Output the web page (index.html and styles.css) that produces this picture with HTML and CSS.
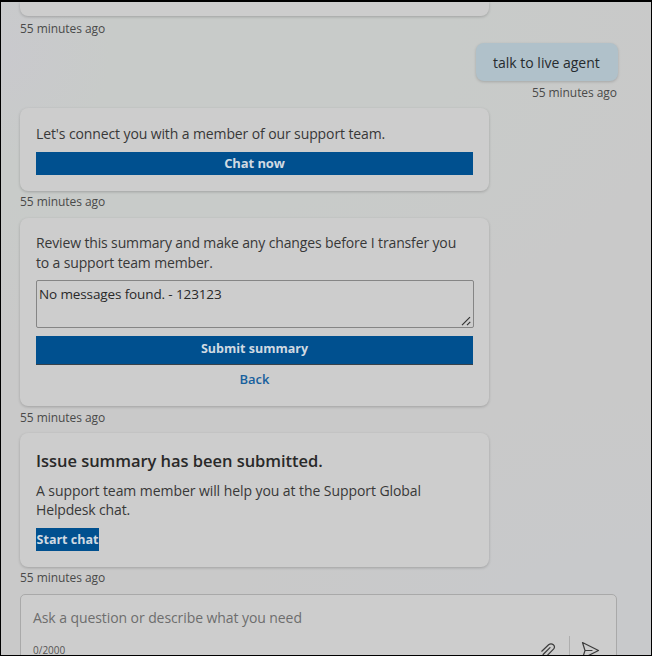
FILE: index.html
```
<!DOCTYPE html>
<html lang="en">
<head>
<meta charset="utf-8">
<title>Support chat</title>
<link rel="stylesheet" href="styles.css">
</head>
<body>
<main class="window">
  <section class="card card-previous"></section>
  <div class="stamp stamp-first"><span>55 minutes ago</span></div>
  <section class="bubble"><span>talk to live agent</span></section>
  <div class="stamp stamp-user"><span>55 minutes ago</span></div>
  <section class="card card-connect">
    <p class="text"><span class="t-connect">Let's connect you with a member of our support team.</span></p>
    <button class="primary chat-now"><span>Chat now</span></button>
  </section>
  <div class="stamp"><span>55 minutes ago</span></div>
  <section class="card card-review">
    <p class="text"><span class="t-review">Review this summary and make any changes before I transfer you</span><br><span class="t-member">to a support team member.</span></p>
    <div class="field">
      <span class="t-field">No messages found. - 123123</span>
      <svg class="grip" width="11" height="10" viewBox="0 0 11 10"><path d="M1 9.2 9 1.2M6 9.2l3.3-3.3"/></svg>
    </div>
    <button class="primary submit"><span>Submit summary</span></button>
    <button class="back"><span>Back</span></button>
  </section>
  <div class="stamp stamp-low"><span>55 minutes ago</span></div>
  <section class="card card-done">
    <h2><span>Issue summary has been submitted.</span></h2>
    <p class="text tight"><span class="t-help">A support team member will help you at the Support Global</span><br><span class="t-desk">Helpdesk chat.</span></p>
    <button class="primary start"><span>Start chat</span></button>
  </section>
  <div class="stamp"><span>55 minutes ago</span></div>
  <section class="composer">
    <div class="placeholder"><span>Ask a question or describe what you need</span></div>
    <div class="tools">
      <span class="count">0/2000</span>
      <svg class="clip" width="18" height="20" viewBox="0 0 18 20"><path d="M1.8 9.2 8.6 2.7C12 .2 16.200 4 13.500 7.200L6.200 14.500C4 16 2 13.800 3.600 12L10 5.600"/></svg>
      <i class="divider"></i>
      <svg class="send" width="20" height="20" viewBox="0 0 20 20"><path d="M1.500 1.500 17.500 9.500 1.500 17.500 4 9.500zM4 9.500h7"/></svg>
    </div>
  </section>
</main>
</body>
</html>
```
FILE: styles.css
```
* { box-sizing: border-box; }
body { margin: 0; }
.window {
  width: 652px;
  height: 656px;
  overflow: hidden;
  display: flex;
  flex-direction: column;
  border: 1px solid #000;
  border-top-width: 2px;
  padding: 0 33px 0 19px;
  font-family: "Open Sans", "Noto Sans", sans-serif;
  font-size: 14px;
  color: #383838;
  background:
    radial-gradient(ellipse 110px 110px at 0 50px, #c9c9cd, rgba(201, 201, 205, 0)),
    radial-gradient(ellipse 430px 260px at 100% 100%, #c8c9cb 40%, rgba(200, 201, 203, 0)),
    radial-gradient(ellipse 530px 300px at 25% 8%, #c8cbc9 55%, rgba(200, 203, 201, 0)),
    #c9c9c9;
}
span { white-space: nowrap; }
p, h2 { margin: 0; }
button { border: 0; padding: 0; font: inherit; display: block; }
.card {
  flex: none;
  width: 469px;
  padding: 0 16px;
  border-radius: 8px;
  background: #cdcdcd;
  box-shadow: 0 1px 3px rgba(0, 0, 0, .2);
}
.card-previous { height: 14px; border-radius: 0 0 8px 8px; }
.card-connect { height: 83px; padding-top: 16px; }
.card-review { height: 188px; padding-top: 15px; }
.card-done { height: 134px; padding-top: 16px; }
.stamp {
  flex: none;
  height: 27px;
  line-height: 22px;
  font-size: 12px;
  color: #4a4a4a;
}
.stamp span { letter-spacing: -.06px; }
.stamp-first { line-height: 25px; }
.stamp-low { line-height: 24px; }
.stamp-user { align-self: flex-end; padding-right: 1px; line-height: 23px; }
.bubble {
  flex: none;
  align-self: flex-end;
  width: 142px;
  height: 38px;
  padding-left: 17px;
  line-height: 39px;
  color: #262b2e;
  border-radius: 8px;
  background: #b0c1ca;
  box-shadow: 0 1px 3px rgba(0, 0, 0, .18);
}
.text { line-height: 20px; }
.text.tight { line-height: 19px; }
.t-connect { letter-spacing: -.11px; }
.t-review { letter-spacing: -.14px; }
.t-member, .t-desk { letter-spacing: -.15px; }
.t-help { letter-spacing: -.07px; }
.primary {
  color: #d0dae2;
  background: #00508f;
  font-size: 12.500px;
  font-weight: 700;
}
.chat-now { width: 437px; height: 23px; margin-top: 8px; line-height: 23px; font-size: 13px; letter-spacing: -.1px; }
.submit { width: 437px; height: 29px; margin-top: 8px; line-height: 24px; padding-bottom: 2px; border-bottom: 1px solid #37424b; }
.start { width: 63px; height: 23px; margin-top: 9px; line-height: 23px; }
.back { width: 437px; height: 28px; line-height: 28px; background: none; color: #17609d; font-size: 13px; font-weight: 600; }
.field {
  position: relative;
  width: 438px;
  height: 48px;
  margin-top: 7px;
  padding-left: 2px;
  line-height: 26px;
  font-size: 13.500px;
  letter-spacing: -.12px;
  color: #292929;
  border: 1px solid #858585;
  border-radius: 2px;
}
.grip { position: absolute; right: 1px; bottom: 1px; fill: none; stroke: #333; stroke-width: 1.200; }
h2 { height: 32px; line-height: 24px; font-size: 16.500px; font-weight: 600; letter-spacing: -.04px; color: #292929; }
.composer {
  flex: none;
  width: 597px;
  height: 100px;
  padding: 0 12px;
  border: 1px solid #a9a9a9;
  border-radius: 5px;
  background: #cdcdcd;
}
.placeholder { height: 41px; line-height: 45px; letter-spacing: -.08px; color: #6d6d6d; }
.tools { display: flex; align-items: flex-start; }
.count { flex: 1; font-size: 10px; line-height: 29px; color: #555; }
.clip, .send { fill: none; stroke: #3c3c3c; stroke-width: 1.200; stroke-linejoin: round; stroke-linecap: round; }
.clip { margin-top: 6px; }
.divider { width: 1px; height: 50px; margin: 0 11px; background: #aeaeae; }
.send { margin: 5px 3px 0 0; }
```
